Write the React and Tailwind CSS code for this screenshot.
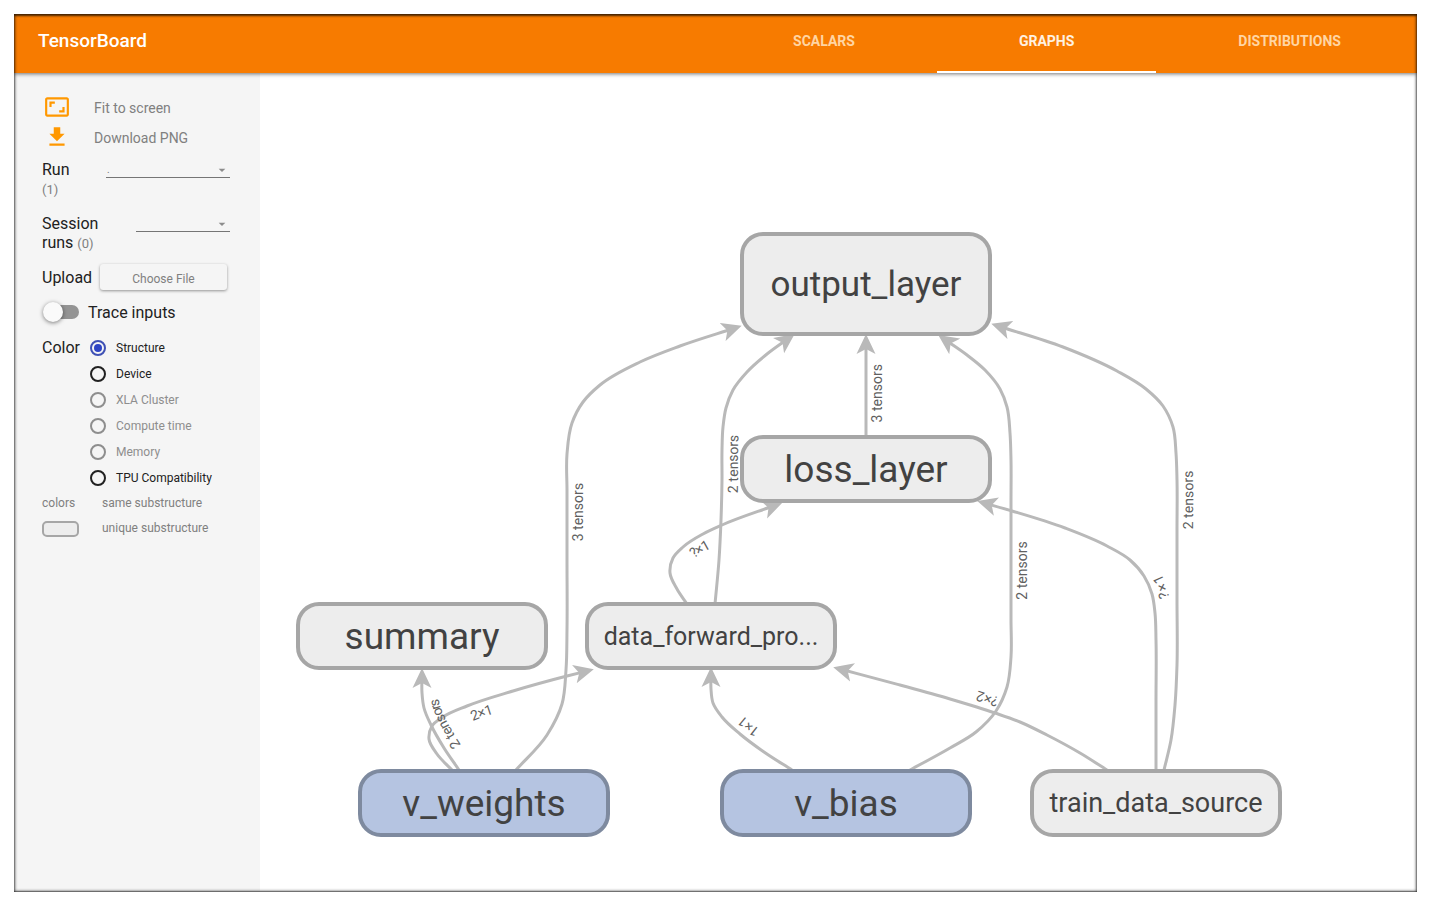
import { MdAspectRatio, MdFileDownload, MdArrowDropDown } from "react-icons/md";

const tabs = [
  { label: "SCALARS", active: false },
  { label: "GRAPHS", active: true },
  { label: "DISTRIBUTIONS", active: false },
];

const colorOptions = [
  { label: "Structure", disabled: false },
  { label: "Device", disabled: false },
  { label: "XLA Cluster", disabled: true },
  { label: "Compute time", disabled: true },
  { label: "Memory", disabled: true },
  { label: "TPU Compatibility", disabled: false },
];

const nodes = [
  { name: "output_layer", x: 742, y: 234, h: 100, text: "text-[35px]", baseline: 12 },
  { name: "loss_layer", x: 742, y: 437, h: 64, text: "text-[37px]", baseline: 13 },
  { name: "summary", x: 298, y: 604, h: 64, text: "text-[37px]", baseline: 13 },
  { name: "data_forward_pro...", x: 587, y: 604, h: 64, text: "text-[25px]", baseline: 9 },
  { name: "v_weights", x: 360, y: 771, h: 64, text: "text-[37px]", baseline: 13, shared: true },
  { name: "v_bias", x: 722, y: 771, h: 64, text: "text-[37px]", baseline: 13, shared: true },
  { name: "train_data_source", x: 1032, y: 771, h: 64, text: "text-[27px]", baseline: 9 },
];

const NODE_WIDTH = 248;

const edges = [
  {
    id: "weights-output",
    label: "3 tensors",
    offset: "49%",
    points: [[516, 770], [547, 735], [562, 704], [566, 670], [567, 630], [567, 560], [567, 490], [567, 454], [572, 423], [583, 402], [600, 385], [640, 362], [680, 346], [735, 328]],
  },
  {
    id: "data-output",
    label: "2 tensors",
    offset: "48%",
    points: [[715, 604], [719, 560], [721, 520], [722, 480], [722, 450], [723, 427], [726, 408], [733, 390], [747, 372], [767, 354], [789, 338]],
  },
  { id: "loss-output", label: "3 tensors", offset: "45%", points: [[866, 436], [866, 390], [866, 341]] },
  {
    id: "bias-output",
    label: "2 tensors",
    offset: "49%",
    points: [[910, 770], [950, 748], [976, 732], [996, 711], [1007, 687], [1011, 657], [1011, 620], [1011, 560], [1011, 500], [1011, 460], [1010, 433], [1007, 407], [1000, 389], [985, 370], [967, 355], [944, 339]],
  },
  {
    id: "train-output",
    label: "2 tensors",
    offset: "49%",
    points: [[1164, 770], [1171, 740], [1175, 705], [1177, 665], [1177, 600], [1177, 530], [1177, 480], [1176, 453], [1173, 427], [1163, 406], [1146, 389], [1117, 371], [1063, 347], [998, 326]],
  },
  {
    id: "train-loss",
    label: "?×1",
    offset: "48%",
    points: [[1156, 770], [1156, 700], [1156, 640], [1155, 613], [1152, 594], [1144, 576], [1130, 560], [1107, 546], [1065, 528], [1012, 511], [984, 503]],
  },
  {
    id: "data-loss",
    label: "?×1",
    offset: "47%",
    points: [[687, 604], [677, 589], [670, 573], [673, 558], [683, 547], [703, 534], [722, 525], [776, 505]],
  },
  {
    id: "weights-data",
    label: "2×1",
    offset: "48%",
    points: [[452, 770], [437, 754], [429, 739], [432, 726], [443, 717], [467, 706], [513, 691], [567, 676], [587, 671]],
  },
  {
    id: "weights-summary",
    label: "2 tensors",
    offset: "47%",
    points: [[459, 770], [444, 748], [431, 725], [424, 708], [422, 693], [422, 675]],
  },
  {
    id: "bias-data",
    label: "1×1",
    offset: "46%",
    points: [[792, 770], [764, 752], [740, 734], [722, 717], [713, 703], [711, 689], [711, 674]],
  },
  {
    id: "train-data",
    label: "?×2",
    offset: "48%",
    points: [[1107, 770], [1080, 753], [1047, 735], [1020, 722], [995, 713], [950, 699], [900, 685], [840, 669]],
  },
];

const distance = (a, b) => Math.hypot(b[0] - a[0], b[1] - a[1]);

// Tangent at the i-th point, weighted by the lengths of the segments beside it.
function tangent(points, i) {
  const p = points[i];
  const before = points[i - 1];
  const after = points[i + 1];
  if (!before || !after) {
    const from = before || p;
    const to = after || p;
    const d = distance(from, to);
    return [(to[0] - from[0]) / d, (to[1] - from[1]) / d];
  }
  const d1 = distance(before, p);
  const d2 = distance(p, after);
  return [0, 1].map((k) => (((p[k] - before[k]) * d2) / d1 + ((after[k] - p[k]) * d1) / d2) / (d1 + d2));
}

// Smooth curve through the routing points of an edge.
function curve(points) {
  let d = `M${points[0][0]} ${points[0][1]}`;
  for (let i = 0; i < points.length - 1; i++) {
    const a = points[i];
    const b = points[i + 1];
    const third = distance(a, b) / 3;
    const ta = tangent(points, i);
    const tb = tangent(points, i + 1);
    d += `C${a[0] + ta[0] * third} ${a[1] + ta[1] * third} ${b[0] - tb[0] * third} ${b[1] - tb[1] * third} ${b[0]} ${b[1]}`;
  }
  return d;
}

function Header() {
  return (
    <header className="z-10 flex h-[59px] shrink-0 justify-between bg-[#f77b00] shadow-[0_1px_4px_rgba(0,0,0,0.55)]">
      <h1 className="pt-[14px] pl-6 text-[19px] leading-[26px] font-medium text-white">TensorBoard</h1>
      <nav className="-mr-[6px] flex">
        {tabs.map((tab) => (
          <a
            key={tab.label}
            href="#"
            className={
              tab.active
                ? "border-b-2 border-white px-[82px] pt-[17px] text-sm font-bold text-[#fff1e0]"
                : "px-[82px] pt-[17px] text-sm font-bold text-[#ffd5a3]"
            }
          >
            {tab.label}
          </a>
        ))}
      </nav>
    </header>
  );
}

function Dropdown({ id, options, className }) {
  return (
    <div className={className}>
      <select
        id={id}
        className="block h-[18px] w-full appearance-none border-b border-[#757575] bg-transparent pl-px text-[10px] text-[#757575] outline-none"
      >
        {options.map((option) => (
          <option key={option}>{option}</option>
        ))}
      </select>
      <MdArrowDropDown className="pointer-events-none absolute top-[2px] right-0 text-[#8c8c8c]" size={16} />
    </div>
  );
}

function Sidebar() {
  return (
    <aside className="w-[246px] shrink-0 bg-[#f5f5f5] pt-[19px] pr-[30px] pl-7 text-base leading-[19px] text-[#212121]">
      <button type="button" className="flex h-[30px] items-center pl-[2px] text-sm text-[#808080]">
        <MdAspectRatio size={26} className="mr-6 text-[#ff9800]" />
        <span className="pt-[2px]">Fit to screen</span>
      </button>
      <button type="button" className="flex h-[30px] items-center pl-[2px] text-sm text-[#808080]">
        <MdFileDownload size={26} className="mr-6 text-[#ff9800]" />
        <span className="pt-[2px]">Download PNG</span>
      </button>

      <div className="mt-2 flex justify-between">
        <label htmlFor="run" className="w-8">
          Run <span className="text-[13px] leading-none text-[#808080]">(1)</span>
        </label>
        <Dropdown id="run" options={["."]} className="relative w-[124px]" />
      </div>

      <div className="mt-4 flex justify-between">
        <label htmlFor="session" className="w-16">
          Session runs <span className="text-[13px] leading-none text-[#808080]">(0)</span>
        </label>
        <Dropdown id="session" options={[""]} className="relative w-[94px]" />
      </div>

      <div className="mt-3 flex items-center justify-between">
        <span>Upload</span>
        <button
          type="button"
          className="mr-[3px] h-[26px] w-[127px] rounded-[3px] bg-[#f5f5f5] pt-[3px] text-xs text-[#808080] shadow-[0_1px_3px_rgba(0,0,0,0.4)]"
        >
          Choose File
        </button>
      </div>

      <label className="mt-3 flex h-5 items-center">
        <input type="checkbox" role="switch" className="peer sr-only" />
        <span className="flex h-[14px] w-[37px] items-center rounded-full bg-linear-to-r from-transparent from-20% to-[#949494] to-20% pl-px">
          <span className="size-5 shrink-0 rounded-full bg-[#fafafa] shadow-[0_1px_4px_rgba(0,0,0,0.5)]" />
        </span>
        <span className="pl-[9px]">Trace inputs</span>
      </label>

      <fieldset className="mt-[13px] flex">
        <legend className="float-left w-12 pt-[3px]">Color</legend>
        <div className="grow">
          {colorOptions.map((option) => (
            <label
              key={option.label}
              className={
                option.disabled
                  ? "flex h-[26px] items-center text-xs text-[#8e8e8e]"
                  : "flex h-[26px] items-center text-xs text-[#212121]"
              }
            >
              <input
                type="radio"
                name="color"
                defaultChecked={option.label === "Structure"}
                disabled={option.disabled}
                className="mr-[10px] flex size-4 shrink-0 appearance-none items-center justify-center rounded-full border-2 border-[#212121] checked:border-[#3f51b5] checked:before:size-2 checked:before:rounded-full checked:before:bg-[#2f45c5] disabled:border-[#8e8e8e]"
              />
              {option.label}
            </label>
          ))}
        </div>
      </fieldset>

      <dl className="grid grid-cols-[60px_1fr] text-xs leading-[25px] text-[#808080]">
        <dt>colors</dt>
        <dd>same substructure</dd>
        <dt className="flex items-center">
          <span className="h-4 w-[37px] rounded-[5px] border-2 border-[#a6a6a6] bg-[#ededed]" />
        </dt>
        <dd>unique substructure</dd>
      </dl>
    </aside>
  );
}

function Graph() {
  return (
    <svg viewBox="260 73 1157 819" className="h-full w-full" role="img" aria-label="Graph">
      <defs>
        <marker
          id="arrow"
          markerUnits="userSpaceOnUse"
          markerWidth="20"
          markerHeight="20"
          refX="13"
          refY="10"
          viewBox="0 0 20 20"
          orient="auto"
        >
          <path d="M0 0.500L20 10L0 19.500L5 10Z" fill="#b9b9b9" />
        </marker>
      </defs>
      {edges.map((edge) => (
        <path
          key={edge.id}
          id={edge.id}
          d={curve(edge.points)}
          fill="none"
          stroke="#b9b9b9"
          strokeWidth="3"
          markerEnd="url(#arrow)"
        />
      ))}
      {edges.map((edge) => (
        <text key={edge.id} textAnchor="middle" className="fill-[#606060] text-[14px]">
          <textPath href={`#${edge.id}`} startOffset={edge.offset}>
            <tspan dy="16">{edge.label}</tspan>
          </textPath>
        </text>
      ))}
      {nodes.map((node) => (
        <g key={node.name}>
          <rect
            x={node.x}
            y={node.y}
            width={NODE_WIDTH}
            height={node.h}
            rx="21"
            strokeWidth="4"
            className={node.shared ? "fill-[#b5c4e1] stroke-[#7e8a9f]" : "fill-[#ededed] stroke-[#a6a6a6]"}
          />
          <text
            x={node.x + NODE_WIDTH / 2}
            y={node.y + node.h / 2 + node.baseline}
            textAnchor="middle"
            className={`fill-[#424242] ${node.text}`}
          >
            {node.name}
          </text>
        </g>
      ))}
    </svg>
  );
}

export default function App() {
  return (
    <div className="flex h-screen min-h-[640px] bg-white p-[14px] font-[Roboto,sans-serif]">
      <div className="relative flex grow flex-col overflow-hidden bg-white">
        <Header />
        <div className="flex min-h-0 grow">
          <Sidebar />
          <main className="min-w-0 grow">
            <Graph />
          </main>
        </div>
        <div className="pointer-events-none absolute inset-0 z-20 shadow-[inset_0_2px_2px_rgba(0,0,0,0.5),inset_0_-1px_1px_rgba(0,0,0,0.3),inset_0_0_3px_1px_rgba(0,0,0,0.6)]" />
      </div>
    </div>
  );
}
